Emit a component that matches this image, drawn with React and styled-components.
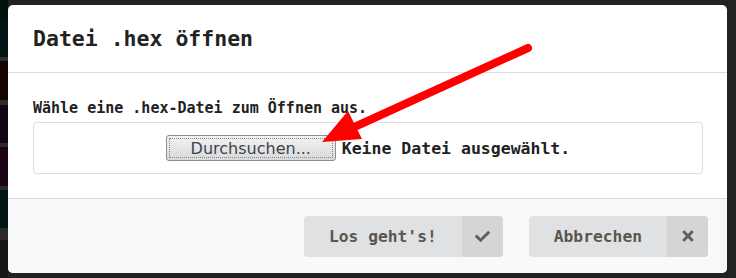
import styled, {createGlobalStyle} from "styled-components";
import {FaCheck, FaTimes} from "react-icons/fa";

const GlobalStyle = createGlobalStyle`
    html, body {
        margin: 0;
        padding: 0;
        background: #222222;
        font-family: "DejaVu Sans Mono", "Liberation Mono", monospace;
    }
`

const stripes = [
    {h: 19, c: "#00100a"},
    {h: 38, c: "#001514"},
    {h: 4, c: "#2e2e2e"},
    {h: 39, c: "#170202"},
    {h: 5, c: "#2b2b2b"},
    {h: 38, c: "#140714"},
    {h: 4, c: "#2b2b2b"},
    {h: 39, c: "#1c0412"},
    {h: 4, c: "#2b2b2b"},
    {h: 38, c: "#001514"},
    {h: 12, c: "#2a2a2a"},
    {h: 42, c: "#161616"},
]

export default function App() {
    return (
        <Page>
            <GlobalStyle/>
            <Backdrop>
                {stripes.map((s, i) => (
                    <Stripe key={i} $h={s.h} $c={s.c}/>
                ))}
            </Backdrop>
            <Modal>
                <Header>Datei .hex öffnen</Header>
                <Body>
                    <Label>Wähle eine .hex-Datei zum Öffnen aus.</Label>
                    <FileBox>
                        <BrowseButton>Durchsuchen...</BrowseButton>
                        <NoFile>Keine Datei ausgewählt.</NoFile>
                    </FileBox>
                </Body>
                <Actions>
                    <LabeledButton>
                        <ButtonText>Los geht's!</ButtonText>
                        <ButtonIcon $size={15}><FaCheck/></ButtonIcon>
                    </LabeledButton>
                    <LabeledButton>
                        <ButtonText>Abbrechen</ButtonText>
                        <ButtonIcon $size={16}><FaTimes/></ButtonIcon>
                    </LabeledButton>
                </Actions>
            </Modal>
            <Arrow viewBox="0 0 736 278" width="736" height="278">
                <line x1="528" y1="48" x2="350" y2="129" stroke="#ff0000" strokeWidth="8" strokeLinecap="round"/>
                <polygon points="322,142 348,111 362,139" fill="#ff0000"/>
            </Arrow>
        </Page>
    )
}

const Page = styled.div`
    position: relative;
    width: 736px;
    height: 278px;
    display: flex;
    align-items: flex-start;
    overflow: hidden;
    background: #222222;
`

const Backdrop = styled.div`
    width: 8px;
    display: flex;
    flex-direction: column;
    flex-shrink: 0;
`

const Stripe = styled.div`
    height: ${p => p.$h}px;
    background: ${p => p.$c};
`

const Modal = styled.div`
    margin-top: 5px;
    width: 719px;
    height: 268px;
    background: #ffffff;
    border-radius: 5px;
    display: flex;
    flex-direction: column;
    overflow: hidden;
`

const Header = styled.div`
    height: 68px;
    box-sizing: border-box;
    padding: 0 25px;
    display: flex;
    align-items: center;
    font-size: 21.5px;
    font-weight: bold;
    color: #222222;
    border-bottom: 1px solid #dcdcdc;
`

const Body = styled.div`
    padding: 24px 24px 24px 25px;
    display: flex;
    flex-direction: column;
`

const Label = styled.div`
    font-size: 15px;
    font-weight: bold;
    line-height: 22px;
    color: #222222;
    margin-bottom: 3px;
`

const FileBox = styled.div`
    height: 52px;
    box-sizing: border-box;
    border: 1px solid #dedede;
    border-radius: 4px;
    display: flex;
    align-items: center;
    justify-content: center;
    gap: 6px;
`

const BrowseButton = styled.button`
    height: 26px;
    width: 170px;
    padding: 0;
    font-family: "DejaVu Sans", sans-serif;
    font-size: 16px;
    color: #3a4450;
    background: linear-gradient(#f2f2f2, #d9d9d9);
    border: 1px solid #8e8e8e;
    border-radius: 3px;
    outline: 1px dotted #8a8a8a;
    outline-offset: -4px;
`

const NoFile = styled.span`
    font-size: 16.5px;
    font-weight: bold;
    color: #222222;
`

const Actions = styled.div`
    flex: 1;
    background: #f8f9fa;
    border-top: 1px solid #dadada;
    display: flex;
    align-items: center;
    justify-content: flex-end;
    gap: 26px;
    padding: 0 19px 0 0;
`

const LabeledButton = styled.button`
    height: 41px;
    padding: 0;
    border: none;
    border-radius: 4px;
    overflow: hidden;
    display: flex;
    background: #e0e1e2;
    font-family: "DejaVu Sans Mono", "Liberation Mono", monospace;
`

const ButtonText = styled.span`
    padding: 0 25px;
    display: flex;
    align-items: center;
    font-size: 16.3px;
    font-weight: bold;
    color: #5a564f;
`

const ButtonIcon = styled.span`
    width: 41px;
    display: flex;
    align-items: center;
    justify-content: center;
    background: #d4d5d6;
    color: #5e5e5e;
    font-size: ${p => p.$size}px;
`

const Arrow = styled.svg`
    position: absolute;
    left: 0;
    top: 0;
    pointer-events: none;
`
